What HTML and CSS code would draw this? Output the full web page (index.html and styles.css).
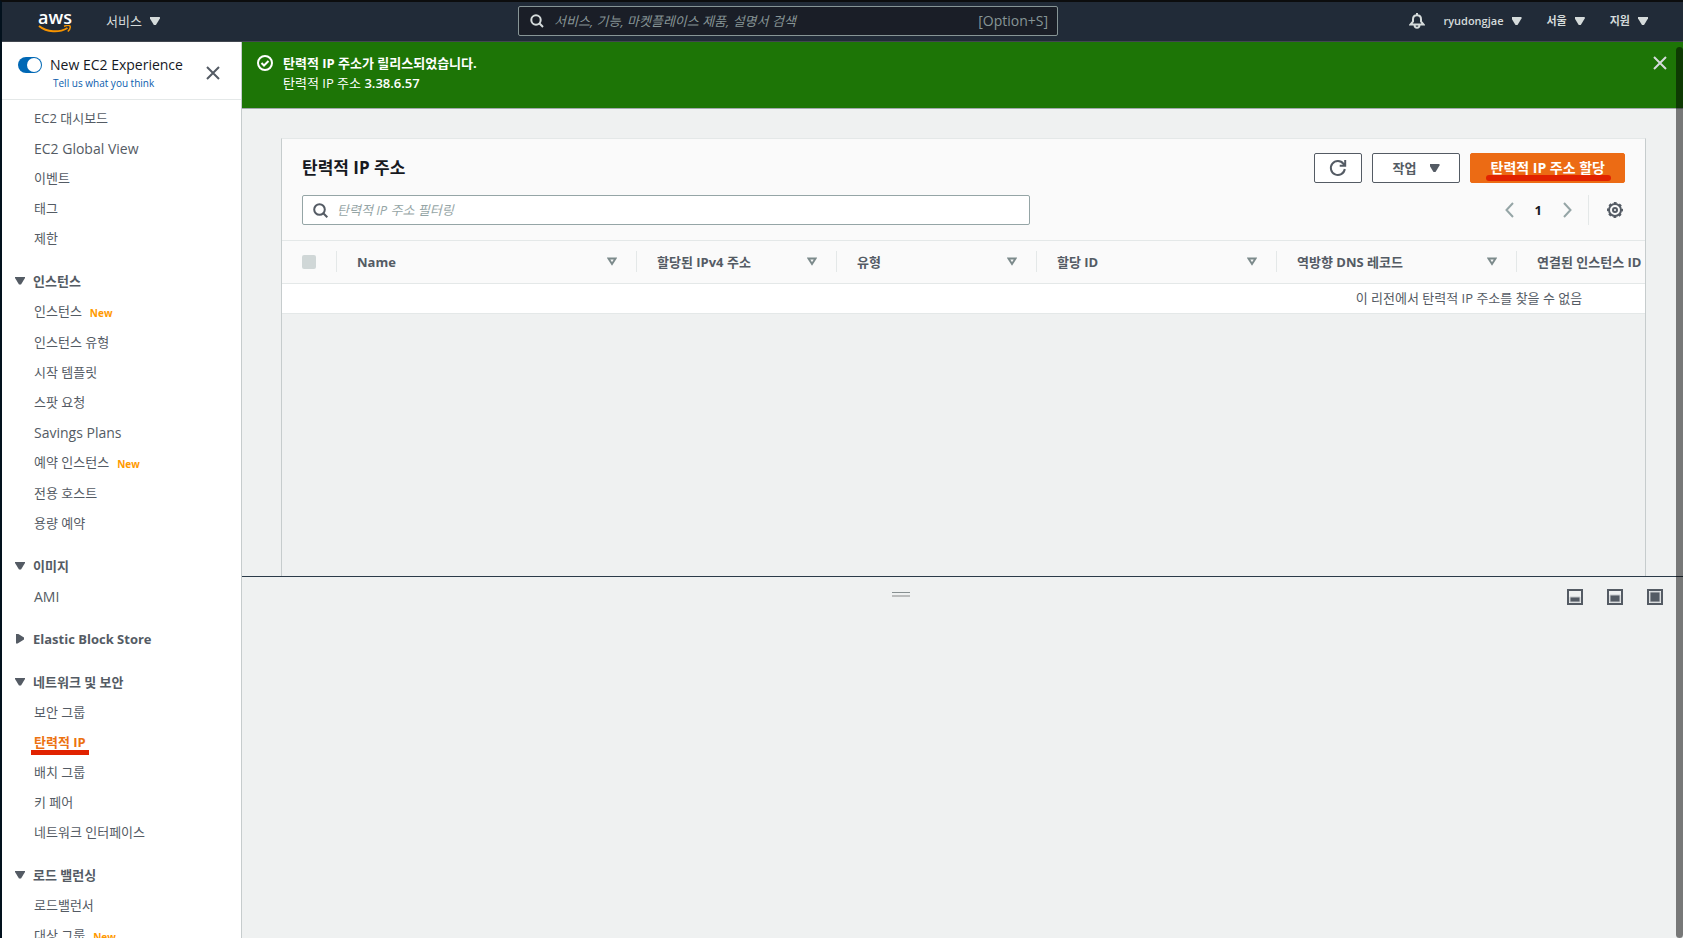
FILE: index.html
```html
<!DOCTYPE html>
<html lang="ko">
<head>
    <meta charset="UTF-8">
    <meta name="viewport" content="width=device-width, initial-scale=1.0">
    <title>탄력적 IP 주소 | EC2</title>
    <link rel="stylesheet" href="styles.css">
</head>
<body>
    <header class="navbar">
        <div class="nav-left">
            <a class="logo" href="#">
                <span>aws</span>
                <svg width="34" height="9" viewBox="0 0 34 9"><path d="M1 1C9 7.500 21 8 29.500 3" fill="none" stroke="#f79400" stroke-width="2"/><path d="M26 1.300C29 .3 31.500 .4 32 1c.5 1-.3 3.600-2.200 5.500" fill="none" stroke="#f79400" stroke-width="1.500"/></svg>
            </a>
            <button class="nav-item services">서비스 <i class="caret"></i></button>
        </div>
        <div class="nav-search">
            <svg width="14" height="14" viewBox="0 0 14 14"><circle cx="6" cy="6" r="4.700"/><path d="M9.300 9.300L13 13"/></svg>
            <input type="text" aria-label="검색" placeholder="서비스, 기능, 마켓플레이스 제품, 설명서 검색">
            <span>[Option+S]</span>
        </div>
        <div class="nav-right">
            <button class="bell" aria-label="알림">
                <svg width="16" height="16" viewBox="0 0 16 16"><path d="M1.500 11.500h13L12 8.500V6.200C12 3.800 10.300 2.300 8 2.300S4 3.800 4 6.200v2.300zM8 2.300V0M5.500 12c.2 3.800 4.800 3.800 5 0"/></svg>
            </button>
            <button class="nav-item">ryudongjae <i class="caret"></i></button>
            <button class="nav-item">서울 <i class="caret"></i></button>
            <button class="nav-item">지원 <i class="caret"></i></button>
        </div>
    </header>

    <div class="layout">
        <nav class="sidebar">
            <div class="experience">
                <input type="checkbox" id="newExperience" class="toggle" checked>
                <div class="experience-text">
                    <label for="newExperience">New EC2 Experience</label>
                    <a href="#">Tell us what you think</a>
                </div>
                <button class="close" aria-label="닫기"><svg width="14" height="14" viewBox="0 0 14 14"><path d="M1 1l12 12M13 1L1 13"/></svg></button>
            </div>
            <ul>
                <li><a href="#">EC2 대시보드</a></li>
                <li><a class="latin" href="#">EC2 Global View</a></li>
                <li><a href="#">이벤트</a></li>
                <li><a href="#">태그</a></li>
                <li><a href="#">제한</a></li>
            </ul>
            <button class="group">인스턴스</button>
            <ul>
                <li class="is-new"><a href="#">인스턴스</a><b>New</b></li>
                <li><a href="#">인스턴스 유형</a></li>
                <li><a href="#">시작 템플릿</a></li>
                <li><a href="#">스팟 요청</a></li>
                <li><a class="latin" href="#">Savings Plans</a></li>
                <li class="is-new"><a href="#">예약 인스턴스</a><b>New</b></li>
                <li><a href="#">전용 호스트</a></li>
                <li><a href="#">용량 예약</a></li>
            </ul>
            <button class="group">이미지</button>
            <ul>
                <li><a class="latin" href="#">AMI</a></li>
            </ul>
            <button class="group collapsed">Elastic Block Store</button>
            <button class="group">네트워크 및 보안</button>
            <ul>
                <li><a href="#">보안 그룹</a></li>
                <li><a class="active" href="#">탄력적 IP</a></li>
                <li><a href="#">배치 그룹</a></li>
                <li><a href="#">키 페어</a></li>
                <li><a href="#">네트워크 인터페이스</a></li>
            </ul>
            <button class="group">로드 밸런싱</button>
            <ul>
                <li><a href="#">로드밸런서</a></li>
                <li class="is-new"><a href="#">대상 그룹</a><b>New</b></li>
            </ul>
        </nav>

        <main class="content">
            <div class="flash">
                <svg class="flash-icon" width="16" height="16" viewBox="0 0 16 16"><circle cx="8" cy="8" r="7"/><path d="M4.500 8l2.500 2.500L11.500 6"/></svg>
                <div class="flash-text">
                    <strong>탄력적 IP 주소가 릴리스되었습니다.</strong>
                    <div>탄력적 IP 주소 <span>3.38.6.57</span></div>
                </div>
                <button class="close" aria-label="닫기"><svg width="14" height="14" viewBox="0 0 14 14"><path d="M1 1l12 12M13 1L1 13"/></svg></button>
            </div>

            <section class="top-pane">
                <div class="panel">
                    <div class="panel-head">
                        <div class="row">
                            <h1>탄력적 IP 주소</h1>
                            <div class="actions">
                                <button class="btn refresh" aria-label="새로 고침"><svg width="18" height="18" viewBox="0 0 18 18"><path d="M15.800 10a7 7 0 1 1-1.300-5.200L16 6.500M16.200 1v5.700h-5.500"/></svg></button>
                                <button class="btn">작업 <i class="caret"></i></button>
                                <button class="btn primary">탄력적 IP 주소 할당</button>
                            </div>
                        </div>
                        <div class="row">
                            <div class="filter">
                                <svg width="15" height="15" viewBox="0 0 15 15"><circle cx="6.500" cy="6.500" r="5.300"/><path d="M10.300 10.300l4 4"/></svg>
                                <input type="text" aria-label="필터" placeholder="탄력적 IP 주소 필터링">
                            </div>
                            <div class="pager">
                                <button aria-label="이전"><svg width="9" height="16" viewBox="0 0 9 16"><path d="M8 1L1.500 8 8 15"/></svg></button>
                                <b>1</b>
                                <button aria-label="다음"><svg width="9" height="16" viewBox="0 0 9 16"><path d="M1 1l6.500 7L1 15"/></svg></button>
                                <button class="gear" aria-label="설정"><svg width="16" height="16" viewBox="0 0 16 16"><circle cx="8" cy="8" r="6"/><circle cx="8" cy="8" r="7" stroke-dasharray="2.750" stroke-dashoffset="1.370"/><circle cx="8" cy="8" r="2"/></svg></button>
                            </div>
                        </div>
                    </div>
                    <table>
                        <thead>
                            <tr>
                                <th class="col-check"><input type="checkbox" aria-label="모두 선택" disabled></th>
                                <th class="col-name"><div>Name<svg width="10" height="9" viewBox="0 0 10 9"><path d="M1.500 1.500h7L5 7z"/></svg></div></th>
                                <th class="col-small"><div>할당된 IPv4 주소<svg width="10" height="9" viewBox="0 0 10 9"><path d="M1.500 1.500h7L5 7z"/></svg></div></th>
                                <th class="col-small"><div>유형<svg width="10" height="9" viewBox="0 0 10 9"><path d="M1.500 1.500h7L5 7z"/></svg></div></th>
                                <th class="col-medium"><div>할당 ID<svg width="10" height="9" viewBox="0 0 10 9"><path d="M1.500 1.500h7L5 7z"/></svg></div></th>
                                <th class="col-medium"><div>역방향 DNS 레코드<svg width="10" height="9" viewBox="0 0 10 9"><path d="M1.500 1.500h7L5 7z"/></svg></div></th>
                                <th><div>연결된 인스턴스 ID</div></th>
                            </tr>
                        </thead>
                        <tbody>
                            <tr><td colspan="7">이 리전에서 탄력적 IP 주소를 찾을 수 없음</td></tr>
                        </tbody>
                    </table>
                </div>
            </section>

            <section class="bottom-pane">
                <div class="handle"></div>
                <div class="pane-sizes">
                    <button aria-label="작게"><svg width="16" height="16" viewBox="0 0 16 16"><rect x="1" y="1" width="14" height="14"/><path d="M3 8h10v5H3z"/></svg></button>
                    <button aria-label="중간"><svg width="16" height="16" viewBox="0 0 16 16"><rect x="1" y="1" width="14" height="14"/><path d="M3 6h10v7H3z"/></svg></button>
                    <button aria-label="크게"><svg width="16" height="16" viewBox="0 0 16 16"><rect x="1" y="1" width="14" height="14"/><path d="M3 3h10v10H3z"/></svg></button>
                </div>
            </section>
            <div class="scrollbar"></div>
        </main>
    </div>
</body>
</html>
```

FILE: styles.css
```css
* {
    box-sizing: border-box;
}
body {
    display: flex;
    flex-direction: column;
    height: 100vh;
    margin: 0;
    border-top: 2px solid #0c0d0e;
    border-left: 2px solid #02111d;
    overflow: hidden;
    background: #eff1f1;
    color: #545b64;
    font-family: "Open Sans", "Noto Sans CJK KR", sans-serif;
    font-size: 13px;
    line-height: 20px;
}
button, input {
    font: inherit;
    color: inherit;
}
button {
    padding: 0;
    border: none;
    background: none;
    cursor: pointer;
}
a {
    color: inherit;
    text-decoration: none;
}
svg {
    display: block;
    flex: none;
    fill: none;
    stroke: currentColor;
    stroke-width: 2;
}
ul {
    margin: 0;
    padding: 0;
    list-style: none;
}
.caret {
    display: inline-block;
    width: 10px;
    height: 8px;
    background: currentColor;
    clip-path: polygon(0 0, 100% 0, 100% 20%, 60% 100%, 40% 100%, 0 20%);
}

/* top bar */
.navbar {
    display: flex;
    align-items: center;
    flex: none;
    height: 40px;
    padding-bottom: 1px;
    border-bottom: 1px solid #414750;
    background: #212b38;
    color: #d5dbdb;
}
.nav-left {
    display: flex;
    align-items: center;
    flex: 0 0 516px;
    padding-left: 36px;
}
.logo {
    display: flex;
    flex-direction: column;
    align-items: center;
    width: 34px;
    color: #fff;
    font-size: 18px;
    font-weight: 600;
    line-height: 16px;
}
.nav-item {
    display: flex;
    align-items: center;
    gap: 8px;
    font-size: 11px;
    font-weight: 600;
}
.services {
    margin-left: 34px;
    font-size: 13px;
    font-weight: 400;
}
.nav-search {
    display: flex;
    align-items: center;
    gap: 10px;
    flex: 0 1 540px;
    height: 30px;
    padding: 0 9px 0 11px;
    border: 1px solid #879596;
    border-radius: 2px;
    background: #1a1e27;
}
.nav-search input {
    flex: 1;
    min-width: 0;
    padding: 0;
    border: none;
    outline: none;
    background: none;
}
.nav-search input::placeholder {
    color: #879596;
    font-style: italic;
}
.nav-search span {
    color: #879596;
    font-size: 14px;
}
.nav-right {
    display: flex;
    align-items: center;
    gap: 25px;
    margin-left: auto;
    padding-right: 35px;
}
.bell {
    margin-right: -7px;
}

.layout {
    display: flex;
    flex: 1;
    min-height: 0;
}

/* left navigation */
.sidebar {
    flex: 0 0 240px;
    overflow: hidden;
    border-right: 1px solid #c6cccd;
    background: #fff;
}
.experience {
    display: flex;
    height: 58px;
    margin-bottom: 4px;
    padding: 13px 21px 0 16px;
    border-bottom: 1px solid #e4e8e8;
}
.toggle {
    appearance: none;
    width: 24px;
    height: 16px;
    margin: 2px 8px 0 0;
    padding: 1px;
    border-radius: 8px;
    background: #0068b5;
}
.toggle::before {
    content: "";
    display: block;
    width: 14px;
    height: 14px;
    margin-left: auto;
    border-radius: 50%;
    background: #fff;
}
.experience-text label {
    display: block;
    color: #16191f;
    font-size: 14px;
    line-height: 20px;
}
.experience-text a {
    display: block;
    margin-left: 3px;
    color: #0a5cad;
    font-size: 10px;
    line-height: 16px;
}
.experience .close {
    margin: 0 0 8px auto;
}
.sidebar li {
    display: flex;
    align-items: center;
    height: 30px;
    padding: 0 0 2px 32px;
}
.sidebar .is-new {
    height: 31px;
    padding-bottom: 3px;
}
.sidebar li b {
    margin: 4px 0 0 8px;
    color: #ff9900;
    font-size: 10px;
}
.sidebar .latin {
    padding-top: 2px;
    font-size: 14px;
}
.sidebar .active {
    position: relative;
    color: #ec7211;
    font-weight: 700;
}
.active::after {
    content: "";
    position: absolute;
    left: -3px;
    right: -3px;
    bottom: -3px;
    height: 5px;
    background: #e12200;
}
.group {
    display: flex;
    align-items: center;
    gap: 8px;
    width: 100%;
    height: 32px;
    margin-top: 11px;
    padding: 0 0 1px 13px;
    font-weight: 700;
}
.group::before {
    content: "";
    width: 10px;
    height: 8px;
    background: currentColor;
    clip-path: polygon(0 0, 100% 0, 100% 20%, 60% 100%, 40% 100%, 0 20%);
}
.collapsed::before {
    width: 8px;
    height: 10px;
    margin: 0 1px;
    clip-path: polygon(0 0, 20% 0, 100% 40%, 100% 60%, 20% 100%, 0 100%);
}

/* main area */
.content {
    position: relative;
    display: flex;
    flex-direction: column;
    flex: 1;
    min-width: 0;
}
.flash {
    display: flex;
    flex: none;
    height: 67px;
    padding: 11px 16px 0 15px;
    border-bottom: 1px solid #a3a9ad;
    background: #1d7506;
    color: #fff;
}
.flash-icon {
    margin: 2px 10px 0 0;
}
.flash-text span {
    font-weight: 600;
}
.flash .close {
    height: 20px;
    margin-left: auto;
    color: #d5dbdb;
}
.top-pane {
    flex: 1;
    min-height: 0;
    padding: 29px 37px 0 39px;
}
.panel {
    height: 100%;
    overflow: hidden;
    border: 1px solid #c6cccd;
    border-top-color: #e4e8e8;
    border-bottom: none;
}
.panel-head {
    display: flex;
    flex-direction: column;
    gap: 12px;
    height: 102px;
    padding: 14px 20px;
    border-bottom: 1px solid #e4e8e8;
    background: #fafafa;
}
.row {
    display: flex;
    align-items: center;
    justify-content: space-between;
    height: 30px;
}
h1 {
    margin: 0;
    color: #16191f;
    font-size: 17px;
}
.actions {
    display: flex;
    gap: 10px;
}
.btn {
    display: flex;
    align-items: center;
    gap: 13px;
    height: 30px;
    padding: 0 19px 0 20px;
    border: 1px solid #545b64;
    border-radius: 2px;
    background: #fff;
    font-weight: 700;
}
.refresh {
    padding: 0 14px;
}
.primary {
    position: relative;
    border-color: #ec6b14;
    background: #ec6b14;
    color: #fff;
    font-size: 14px;
}
.primary::after {
    content: "";
    position: absolute;
    left: 15px;
    right: 13px;
    bottom: 1px;
    height: 6px;
    border-radius: 3px;
    background: #e12200;
}
.filter {
    display: flex;
    align-items: center;
    gap: 9px;
    width: 55%;
    height: 30px;
    padding-left: 10px;
    border: 1px solid #95a5a6;
    border-radius: 2px;
    background: #fff;
}
.filter input {
    flex: 1;
    min-width: 0;
    padding: 0;
    border: none;
    outline: none;
    background: none;
}
.filter input::placeholder {
    color: #95a5a6;
    font-style: italic;
}
.filter svg {
    color: #545b64;
}
.pager {
    display: flex;
    align-items: center;
    gap: 21px;
    height: 30px;
    color: #95a5a6;
}
.pager b {
    color: #16191f;
}
.gear {
    display: flex;
    align-items: center;
    height: 30px;
    margin-left: -5px;
    padding: 0 2px 0 18px;
    border-left: 1px solid #e4e8e8;
    color: #545b64;
}

table {
    width: 2374px;
    table-layout: fixed;
    border-collapse: collapse;
}
thead tr {
    height: 42px;
    background: #fafafa;
}
tr {
    border-bottom: 1px solid #e4e8e8;
}
th {
    padding: 0;
    text-align: left;
}
th div {
    display: flex;
    align-items: center;
    justify-content: space-between;
    height: 21px;
    padding: 0 19px 0 20px;
    border-left: 1px solid #e4e8e8;
    white-space: nowrap;
}
th svg {
    color: #7d8b8c;
}
.col-check {
    width: 54px;
    padding-left: 20px;
}
.col-check input {
    appearance: none;
    display: block;
    width: 14px;
    height: 14px;
    margin: 0;
    border-radius: 2px;
    background: #d0d7d7;
}
.col-name {
    width: 300px;
}
.col-small {
    width: 200px;
}
.col-medium {
    width: 240px;
}
td {
    height: 30px;
    padding: 0;
    background: #fff;
    text-align: center;
}

/* details split pane */
.bottom-pane {
    display: grid;
    grid-template-columns: 1fr auto 1fr;
    align-items: start;
    flex: 0 0 362px;
    padding: 12px 20px 0;
    border-top: 1px solid #2b3b49;
}
.handle {
    grid-column: 2;
    width: 18px;
    height: 5px;
    margin: 3px 124px 0 0;
    border-top: 1px solid #879091;
    border-bottom: 2px solid #bbbdbd;
}
.pane-sizes {
    display: flex;
    justify-content: flex-end;
    gap: 24px;
}
.pane-sizes path {
    fill: currentColor;
    stroke: #c5c9cc;
    stroke-width: 1;
}
.scrollbar {
    position: absolute;
    top: 5px;
    right: 0;
    bottom: 0;
    width: 7px;
    border-radius: 4px;
    background: rgba(0, 0, 0, 0.5);
}
```
